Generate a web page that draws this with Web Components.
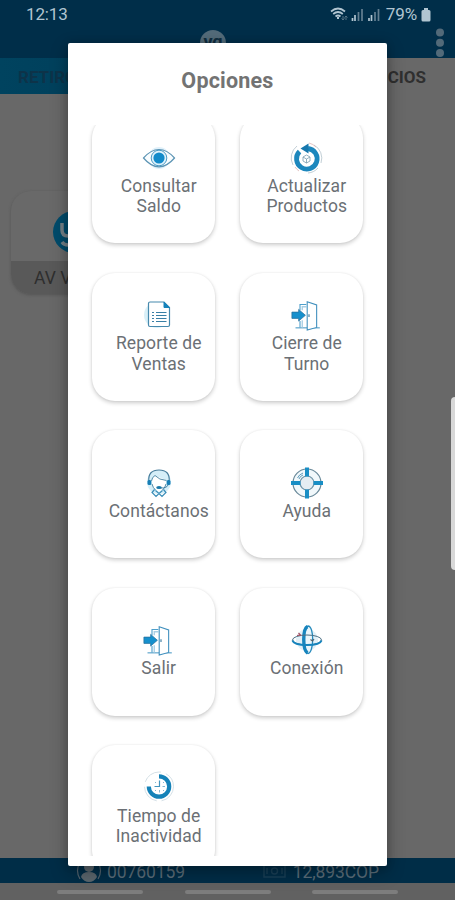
<!DOCTYPE html>
<html lang="es">
<head>
<meta charset="utf-8">
<title>Opciones</title>
<style>
html,body{margin:0;height:100%;overflow:hidden;font-family:Roboto,"Liberation Sans",sans-serif}
</style>
</head>
<body>
<pos-app></pos-app>
<script>
const define = (name, html) => {
  const t = document.createElement('template');
  t.innerHTML = html;
  customElements.define(name, class extends HTMLElement {
    constructor() {
      super();
      this.attachShadow({mode: 'open'}).appendChild(t.content.cloneNode(true));
    }
  });
};

const door = `<g transform="translate(1 1.500) scale(.9)">
  <path d="M5 31.500H32" stroke="#4e9cc6" stroke-width="1.200"/>
  <path d="M10 12V5.500H17M10 24V31" stroke="#4d9fcb" stroke-width="1.200"/>
  <path d="M12.500 12V8H17M12.500 23V31" stroke="#a9cfe4" stroke-width="1.500"/>
  <path d="M18 2.500L28.500 6V31L18 34Z" fill="#fff" stroke="#3f8fbd" stroke-width="1.200"/>
  <path d="M20 16.500v3" stroke="#3f7ea3" stroke-width="1.300"/>
  <path d="M1 14H8.500V11L16 17.500L8.500 24V21H1Z" fill="#1690cd" stroke="#286f9b" stroke-width=".8"/></g>`;

const icons = {
  eye: `<circle cx="17" cy="17" r="11" fill="#e1f1fa"/>
    <path d="M1.500 17Q9 8.500 17 8.500T32.500 17Q25 25.800 17 25.800T1.500 17Z" fill="#f9fdff" stroke="#5c94b4" stroke-width="1.200"/>
    <circle cx="17" cy="17" r="7.800" fill="#dff2fc" stroke="#4c9bc4"/><circle cx="17" cy="17" r="5.600" fill="#138bca"/>`,
  refresh: `<path d="M7 5A15 15 0 0 0 3 24M24 4A15 15 0 0 1 31 22M18 32A15 15 0 0 0 28 27" stroke="#b3c3cb" stroke-width=".8"/>
    <path d="M19 2A15 15 0 0 1 26 6M5 26A15 15 0 0 0 9 30" stroke="#d9aaaa" stroke-width=".7"/>
    <path d="M9.500 10.500A10.300 10.300 0 1 0 18 7.500" stroke="#1c87bd" stroke-width="4.800"/>
    <path d="M10.500 7.500L18.500 2.500V12.500Z" fill="#1778ae"/>
    <path d="M16.500 14L20 16V20L16.500 22L13 20V16ZM13 16L16.500 18L20 16M16.500 18V22" stroke="#789cae" stroke-width=".8"/>`,
  report: `<circle cx="15" cy="17" r="13" fill="#d9f0f8"/>
    <path d="M8 4H22L27.500 9.500V27Q27.500 28.500 26 28.500H8Q6.500 28.500 6.500 27V5.500Q6.500 4 8 4Z" fill="#fff" stroke="#4689ad" stroke-width="1.200"/>
    <path d="M22 4V9.500H27.500Z" fill="#1682ba" stroke="#1682ba"/>
    <path d="M10 14.500h2M10 17.500h2M10 20.500h2M10 23.500h2M14 14.500H24.500M14 17.500H24.500M14 20.500H24.500M14 23.500H24.500" stroke="#397fa5" stroke-width="1.200"/>`,
  door,
  support: `<circle cx="17" cy="16" r="12" fill="#d5eef8"/>
    <path d="M10 14V17Q11 23 17 26Q23 23 24 17V14L19 12L13 9.500Z" fill="#fff"/>
    <path d="M6.800 15Q6 4 17 4T27.200 15" stroke="#477d9c" stroke-width="1.200"/>
    <path d="M9.500 15Q10 11 13 9.500Q17 14 24.500 14.500M10 18Q11 22 13.500 24M24 18Q23 22 20.500 24" stroke="#568ca8" stroke-width="1"/>
    <rect x="5.500" y="14" width="3.800" height="5" rx="1.500" fill="#167eb5"/><rect x="24.700" y="14" width="3.800" height="5" rx="1.500" fill="#167eb5"/>
    <path d="M26 19Q25 22 19 22" stroke="#286c93" stroke-width=".8"/>
    <ellipse cx="17" cy="21.500" rx="2.800" ry="1.600" fill="#1978aa"/>
    <path d="M12.500 23.500L10 26.500L14 30.500L17 27.500L20 30.500L24 26.500L21.500 23.500M13.500 24.500L17 27.500L20.500 24.500" stroke="#3a8db8" stroke-width="1.200"/>`,
  help: `<circle cx="17" cy="17" r="14" fill="#f1f8fb" stroke="#688899" stroke-width="1.200"/>
    <circle cx="17" cy="17" r="7" fill="#e5edf2" stroke="#6f94a7" stroke-width="1.200"/>
    <path d="M7.500 12Q9 8.500 13 7M9 13Q10 10 13 9" stroke="#4e91b3" stroke-width=".9"/>
    <path d="M17 1.500V10.500M17 23.500V32.500M1 17H10.500M23.500 17H33" stroke="#188ec5" stroke-width="4"/>`,
  globe: `<circle cx="17" cy="17" r="11" fill="#e2f0f7"/>
    <path d="M18 3C24.500 3 24 30 18 30.500C13 30 12 4 18 3Z" fill="#eaf5fa" stroke="#268abc" stroke-width="1.300"/>
    <path d="M17.500 3.500C12.500 6 12.500 27 17.500 30" stroke="#1684bd" stroke-width="3.400"/>
    <ellipse cx="17" cy="17" rx="14.500" ry="5" stroke="#4a6f84" stroke-width="1"/>
    <path d="M2.500 17.500Q4 22 17 22T31.500 17.500" stroke="#1684bd" stroke-width="2.200"/>
    <path d="M7 12.500L10.500 12L8.500 10" stroke="#a74f60" stroke-width="1.200"/><path d="M20.500 16.500L22.500 18L24 16" stroke="#51616b" stroke-width="1.200"/>`,
  clock: `<circle cx="17" cy="15.500" r="14.500" stroke="#cad8df" stroke-width=".8" stroke-dasharray="20 5"/>
    <path d="M17 5.300A10.200 10.200 0 1 1 6.800 15.500" stroke="#1582b8" stroke-width="4.200"/>
    <path d="M17.500 9.500V15.500H12.500" stroke="#4495be" stroke-width="1.200"/><path d="M17.500 19v2.500M20.500 15.500h2.500M13 11l1 1M22 11l-1 1M13 20l1-1M22 20l-1-1" stroke="#83b7d1" stroke-width="1"/>`
};

define('status-bar', `
<style>
:host{display:flex;justify-content:space-between;height:28px;box-sizing:border-box;padding:0 24px 0 26px;align-items:center;color:#b1c5d1;font-size:17px;line-height:26px}
.right{display:flex;align-items:center}
svg{display:block}
.time{letter-spacing:-.15px}
.pct{margin-left:3px;letter-spacing:-.1px}
</style>
<span class="time">12:13</span>
<span class="right">
<svg width="53" height="18" viewBox="0 0 53 18" fill="none" stroke="#b1c5d1">
<path d="M1 6.500Q8 .5 15 6.500M3.200 9Q8 5 12.800 9M5.500 11.500Q8 9.500 10.500 11.500" stroke-width="1.700"/><path d="M7 13h2" stroke-width="2"/>
<path d="M13 11v4m-1.500-1.500L13 15l1.500-1.500M16 15v-4m-1.500 1.500L16 11l1.500 1.500" stroke="#547386" stroke-width="1"/>
<path d="M22.500 13v3M25 10v6M39 13v3M41.500 10v6" stroke-width="1.700"/>
<path d="M28.500 7v9M32 4v12M45 7v9M48.500 4v12" stroke="#637f91" stroke-width="1.700"/>
</svg>
<span class="pct">79%</span>
<svg style="margin-left:4px" width="10" height="15" viewBox="0 0 10 15"><path d="M3 1H7V3H8Q9.500 3 9.500 4.500V13Q9.500 14.500 8 14.500H2Q.5 14.500 .5 13V4.500Q.5 3 2 3H3Z" fill="#b1c5d1"/></svg>
</span>`);

define('app-header', `
<style>
:host{display:flex;height:30px;box-sizing:border-box;padding:0 8px 0 200px;justify-content:space-between;align-items:flex-start}
.logo{width:26px;height:26px;margin-top:2px;border-radius:50%;background:#536b79;color:#102e40;font-weight:700;font-size:18px;line-height:24px;text-align:center}
svg{display:block}
</style>
<span class="logo">yg</span>
<svg width="14" height="30" fill="#526a79"><circle cx="7" cy="4.500" r="4"/><circle cx="7" cy="14.700" r="4"/><circle cx="7" cy="25" r="4"/></svg>`);

define('tab-strip', `
<style>
:host{display:flex;height:36px;font-size:17px;font-weight:700;line-height:39px;justify-content:space-between;background:#686868;color:#2f2f2f}
.on{width:130px;box-sizing:border-box;padding-left:18px;background:linear-gradient(90deg,#00435f,#003e5a);color:#0d3349}
.off{padding-right:29px}
</style>
<span class="on">RETIROS</span><span class="off">SERVICIOS</span>`);

define('product-card', `
<style>
:host{display:flex;flex-direction:column;width:122px;height:103px;border-radius:20px;overflow:hidden;background:#696969;box-shadow:0 1px 3px #555}
.pic{flex:1;display:flex;align-items:center;justify-content:center}
.label{height:33px;background:#595959;color:#2e2e2e;font-size:17.500px;line-height:35px;padding-left:23px;white-space:nowrap}
svg{display:block;margin:12px 0 0 4px}
</style>
<div class="pic"><svg width="42" height="42" viewBox="0 0 42 42" fill="none"><circle cx="21" cy="21" r="21" fill="#004b6b"/><path d="M9 12V19Q9 25 15 25T21 19V12M21 19V28Q21 34 15 34Q11 34 9 31" stroke="#748087" stroke-width="3.500"/></svg></div>
<div class="label">AV Villas</div>`);

define('info-bar', `
<style>
:host{display:flex;height:25px;background:#002d47;color:#5a6c78;font-size:17.500px;line-height:29px;box-sizing:border-box;padding:0 76px;justify-content:space-between;overflow:hidden}
span{display:flex;letter-spacing:-.1px}
svg{display:block;flex:none}
</style>
<span><svg width="31" height="25" viewBox="0 0 31 25"><path d="M4 4Q-1 13 4 21M22 4Q27 13 22 21" fill="none" stroke="#53636e" stroke-width="1.200"/><circle cx="13" cy="9" r="5" fill="#5b666d"/><path d="M5 19Q6 14 13 14T21 19Q18 24 13 24T5 19Z" fill="#5b666d"/></svg>00760159</span>
<span><svg width="31" height="25" viewBox="0 0 31 25" fill="none" stroke="#193f56" stroke-width="1.500"><rect x="2" y="7" width="21" height="12"/><circle cx="12.500" cy="13" r="3"/><path d="M5 10v6M20 10v6"/></svg>12,893COP</span>`);

define('nav-bar', `
<style>
:host{display:flex;height:17px;background:#616161;box-sizing:border-box;padding:7px 57px 0;justify-content:space-between}
i{height:4px;width:86px;border-radius:2px;background:#7d7d7d}
</style><i></i><i></i><i></i>`);

define('option-card', `
<style>
:host{display:flex;flex-direction:column;align-items:center;justify-content:center;height:128px;box-sizing:border-box;padding-left:11px;border-radius:23px;background:#fff;box-shadow:0 2px 4px rgba(0,0,0,.2),0 0 2px rgba(0,0,0,.07);color:#6b7075;font-size:17.500px;line-height:20.200px;text-align:center;letter-spacing:.08px;white-space:nowrap}
svg{display:block;width:34px;height:34px;margin:-1px 0 1px}
</style>
<svg viewBox="0 0 34 34" fill="none"></svg>
<div><slot></slot></div>`);

define('options-dialog', `
<style>
:host{display:flex;flex-direction:column;box-sizing:border-box;padding:0 10px 10px;background:#fff;border-radius:2px;box-shadow:0 6px 18px rgba(0,0,0,.3),0 0 8px rgba(0,0,0,.15)}
h1{margin:0;height:82px;box-sizing:border-box;padding-top:25px;text-align:center;font-size:21.500px;line-height:25px;font-weight:700;color:#737373;letter-spacing:.2px}
.scroll{flex:1;min-height:0;overflow:hidden}
.grid{display:grid;grid-template-columns:122.500px 122.500px;column-gap:25.500px;row-gap:29.500px;padding:0 14px;margin-top:-9.500px}
</style>
<h1>Opciones</h1>
<div class="scroll"><div class="grid">
<option-card icon="eye">Consultar<br>Saldo</option-card>
<option-card icon="refresh">Actualizar<br>Productos</option-card>
<option-card icon="report">Reporte de<br>Ventas</option-card>
<option-card icon="door">Cierre de<br>Turno</option-card>
<option-card icon="support">Contáctanos</option-card>
<option-card icon="help">Ayuda</option-card>
<option-card icon="door">Salir</option-card>
<option-card icon="globe">Conexión</option-card>
<option-card icon="clock">Tiempo de<br>Inactividad</option-card>
</div></div>`);

define('pos-app', `
<style>
:host{display:flex;flex-direction:column;position:relative;width:455px;height:900px;background:#686868;overflow:hidden}
.top{background:#002e49}
main{flex:1;padding:97px 11px 0}
options-dialog{position:absolute;left:68px;top:42.500px;width:319px;height:823.500px}
.edge{position:absolute;right:0;top:397px;width:4px;height:173px;border-radius:4px 0 0 4px;background:#d8d8d8}
</style>
<div class="top"><status-bar></status-bar><app-header></app-header></div>
<tab-strip></tab-strip>
<main><product-card></product-card></main>
<info-bar></info-bar>
<nav-bar></nav-bar>
<options-dialog></options-dialog>
<div class="edge"></div>`);

const dialog = document.querySelector('pos-app').shadowRoot.querySelector('options-dialog');
for (const card of dialog.shadowRoot.querySelectorAll('option-card'))
  card.shadowRoot.querySelector('svg').innerHTML = icons[card.getAttribute('icon')];
</script>
</body>
</html>
